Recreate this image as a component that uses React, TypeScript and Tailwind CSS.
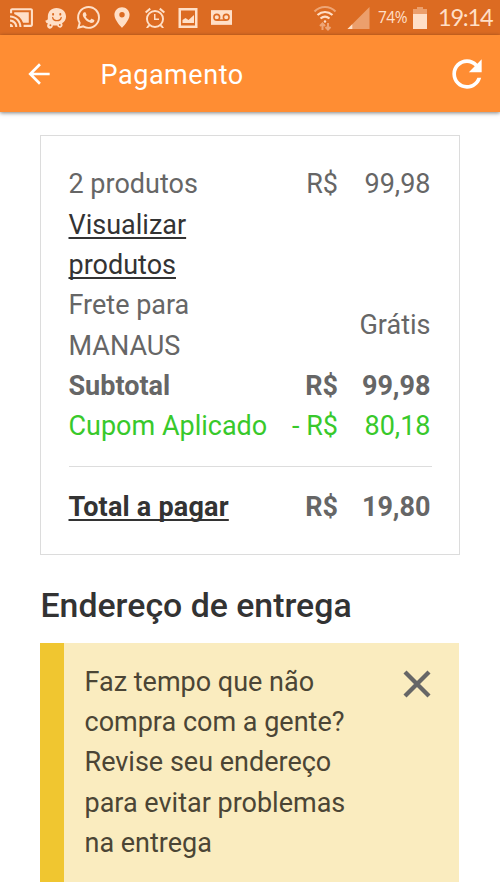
import type { ReactNode } from 'react';

const ROBOTO = "font-['Roboto',sans-serif]";

function Icon({ className, children }: { className: string; children: ReactNode }) {
  return (
    <svg viewBox="0 0 24 24" fill="currentColor" className={`shrink-0 ${className}`}>
      {children}
    </svg>
  );
}

function StatusBar() {
  return (
    <div className="flex h-[35px] items-center bg-[#dc6b22] text-[#ffdfc7]">
      <Icon className="ml-[9px] size-[25px]">
        <path d="M21 3H3c-1.100 0-2 .9-2 2v3h2V5h18v14h-7v2h7c1.100 0 2-.9 2-2V5c0-1.100-.9-2-2-2zM1 18v3h3c0-1.660-1.340-3-3-3zm0-4v2c2.760 0 5 2.240 5 5h2c0-3.870-3.130-7-7-7zm0-4v2c4.970 0 9 4.030 9 9h2c0-6.080-4.930-11-11-11z" />
        <path d="M5 7h14v10h-5.500C12 13 9 10 5 8.600z" />
      </Icon>
      <Icon className="ml-[10px] size-[23px]">
        <path d="M13 2C7.500 2 4 6 4 11v2c0 1.300-.8 2-2.500 2 0 1.500 1 2.700 2.800 3.300a3 3 0 1 0 4.900 2h4.600a2.800 2.800 0 1 0 5-2.200C21.500 16.500 23 14 23 11c0-5-4-9-10-9z" />
        <g fill="none" stroke="#dc6b22" strokeWidth="1.300" strokeLinecap="round">
          <path d="M9 12c1 4.500 8 4.500 9 0" />
          <path d="M9.500 8.200v.8M17 8.200v.8" strokeWidth="2" />
        </g>
        <circle cx="6.700" cy="20" r="1" fill="#dc6b22" />
        <circle cx="16.500" cy="19.800" r="1" fill="#dc6b22" />
      </Icon>
      <Icon className="ml-[10px] size-[23px]">
        <path d="M17.472 14.382c-.297-.149-1.758-.867-2.030-.967-.273-.099-.471-.148-.670.150-.197.297-.767.966-.940 1.164-.173.199-.347.223-.644.075-.297-.150-1.255-.463-2.390-1.475-.883-.788-1.480-1.761-1.653-2.059-.173-.297-.018-.458.130-.606.134-.133.298-.347.446-.520.149-.174.198-.298.298-.497.099-.198.050-.371-.025-.520-.075-.149-.669-1.612-.916-2.207-.242-.579-.487-.500-.669-.510-.173-.008-.371-.010-.570-.010-.198 0-.520.074-.792.372-.272.297-1.040 1.016-1.040 2.479 0 1.462 1.065 2.875 1.213 3.074.149.198 2.096 3.200 5.077 4.487.709.306 1.262.489 1.694.625.712.227 1.360.195 1.871.118.571-.085 1.758-.719 2.006-1.413.248-.694.248-1.289.173-1.413-.074-.124-.272-.198-.570-.347m-5.421 7.403h-.004a9.870 9.870 0 01-5.031-1.378l-.361-.214-3.741.982.998-3.648-.235-.374a9.860 9.860 0 01-1.510-5.260c.001-5.450 4.436-9.884 9.888-9.884 2.640 0 5.122 1.030 6.988 2.898a9.825 9.825 0 012.893 6.994c-.003 5.450-4.437 9.884-9.885 9.884m8.413-18.297A11.815 11.815 0 0012.050 0C5.495 0 .160 5.335.157 11.892c0 2.096.547 4.142 1.588 5.945L.057 24l6.305-1.654a11.882 11.882 0 005.683 1.448h.005c6.554 0 11.890-5.335 11.893-11.893a11.821 11.821 0 00-3.480-8.413z" />
      </Icon>
      <Icon className="ml-[9px] size-[26px]">
        <path d="M12 2C8.130 2 5 5.130 5 9c0 5.250 7 12 7 12s7-6.750 7-12c0-3.870-3.130-7-7-7zm0 9.500a2.500 2.500 0 0 1 0-5 2.500 2.500 0 0 1 0 5z" />
      </Icon>
      <Icon className="ml-[8px] size-[24px]">
        <path d="M22 5.720l-4.600-3.860-1.290 1.530 4.600 3.860L22 5.720zM7.880 3.390L6.600 1.860 2 5.710l1.290 1.530 4.590-3.850zM12.500 8H11v6h5v-1.500h-3.500V8zM12 4a9 9 0 1 0 .001 18.001A9 9 0 0 0 12 4zm0 16c-3.870 0-7-3.130-7-7s3.130-7 7-7 7 3.130 7 7-3.130 7-7 7zM5 19l-2 3h2l2-2zM19 19l2 3h-2l-2-2z" />
      </Icon>
      <Icon className="ml-[9px] size-[24px]">
        <path fillRule="evenodd" d="M2.500 2h19v20h-19zm2.500 2.500v15h14v-15z" />
        <path d="M6.500 17v-3l3-2 3 2 5.500-5v8z" />
      </Icon>
      <svg viewBox="0 0 20 14" className="ml-[11px] h-[15px] w-[21px] shrink-0">
        <rect width="20" height="14" fill="currentColor" />
        <g fill="none" stroke="#dc6b22" strokeWidth="1.500">
          <circle cx="5.500" cy="6.700" r="2.700" />
          <circle cx="14.500" cy="6.700" r="2.700" />
          <path d="M5 9.500h10" />
        </g>
      </svg>
      <svg viewBox="0 0 24 26" fill="none" stroke="currentColor" strokeWidth="2.200" className="ml-[81px] h-[26px] w-6 shrink-0">
        <path d="M1.500 6.500c6-6 15-6 21 0" opacity=".5" />
        <path d="M4.500 10c4.500-4 10.500-4 15 0M7.500 13.500c3-2.500 6-2.500 9 0" />
        <circle cx="12" cy="16.500" r="1.200" fill="currentColor" stroke="none" />
        <path d="M9.500 25v-6M7 21l2.500-2.500L12 21M15 18v6M12.500 22l2.500 2.500 2.500-2.500" opacity=".5" strokeWidth="2" />
      </svg>
      <svg viewBox="0 0 23 23" fill="currentColor" className="ml-[10px] h-[22px] w-[23px] shrink-0">
        <path d="M23 0v23H0z" opacity=".45" />
        <path d="M5 18v5H0z" />
      </svg>
      <span className="ml-[8px] w-[30px] pt-px font-['Open_Sans',sans-serif] text-[15.500px] leading-none tracking-[-0.500px]">74%</span>
      <svg viewBox="0 0 14 22" fill="currentColor" className="ml-[5px] h-[22px] w-[14px] shrink-0">
        <path d="M4 0h6v2h4v5H0V2h4z" opacity=".45" />
        <path d="M0 7h14v15H0z" />
      </svg>
      <span className="ml-[11px] pt-px font-['Lato',sans-serif] text-[23.500px] leading-none tracking-[-1.200px]">19:14</span>
    </div>
  );
}

function AppBar() {
  return (
    <header className="flex h-[77px] items-center bg-[#ff8d33] text-white shadow-[0_1px_4px_rgba(0,0,0,0.500)]">
      <Icon className="ml-[23px] size-[32px]">
        <path d="M20 11H7.830l5.590-5.590L12 4l-8 8 8 8 1.410-1.410L7.830 13H20v-2z" />
      </Icon>
      <h1 className="ml-[45.500px] flex-1 pt-[3px] text-[27px] leading-none tracking-[0.550px]">Pagamento</h1>
      <Icon className="mr-[11px] size-[44px]">
        <path d="M17.650 6.350C16.200 4.900 14.210 4 12 4c-4.420 0-7.990 3.580-7.990 8s3.570 8 7.990 8c3.730 0 6.840-2.550 7.730-6h-2.080c-.820 2.330-3.040 4-5.650 4-3.310 0-6-2.690-6-6s2.690-6 6-6c1.660 0 3.140.690 4.220 1.780L13 11h7V4l-2.350 2.350z" />
      </Icon>
    </header>
  );
}

function Row({ label, currency, amount, className = '' }: { label: ReactNode; currency?: string; amount?: string; className?: string }) {
  return (
    <div className={`flex items-center ${className}`}>
      <div className="flex-1 whitespace-nowrap">{label}</div>
      <div>{currency}</div>
      <div className="w-[94px] pr-[1.500px] text-right">{amount}</div>
    </div>
  );
}

export default function App() {
  return (
    <div className={`h-[889px] overflow-hidden bg-white text-[27px] leading-[40.333px] text-[#666] ${ROBOTO}`}>
      <StatusBar />
      <AppBar />
      <main className="pr-[40px] pl-[40px]">
        <section className="mt-[23px] border border-[#dcdcdc] pr-[27px] pl-[27.500px] pt-[28.200px] pb-[26.500px]">
          <Row label="2 produtos" currency="R$" amount="99,98" />
          <a className="block w-[140px] text-[#333] underline decoration-[1.500px] underline-offset-[3px] [text-decoration-skip-ink:none]">
            Visualizar produtos
          </a>
          <Row label={<>Frete para<br />MANAUS</>} amount="Grátis" />
          <Row label="Subtotal" currency="R$" amount="99,98" className="font-bold" />
          <Row label="Cupom Aplicado" currency="- R$" amount="80,18" className="text-[#38c92b]" />
          <hr className="mt-[19.400px] mb-[20px] border-[#ddd]" />
          <Row
            label={<span className="tracking-[0.200px] text-[#333] underline decoration-[1.500px] underline-offset-[3px] [text-decoration-skip-ink:none]">Total a pagar</span>}
            currency="R$"
            amount="19,80"
            className="font-bold"
          />
        </section>
        <h2 className="mt-[31.500px] pl-[0.500px] text-[33.850px] font-medium text-[#333]">Endereço de entrega</h2>
        <section className="mt-[16px] mr-px flex items-start justify-between border-l-[24px] border-[#f0c630] bg-[#faecbf] pt-[19.300px] pr-[28px] pb-[18.500px] pl-[20.500px] text-[#4b4535]">
          <p className="w-[275px]">Faz tempo que não<br />compra com a gente?<br />Revise seu endereço<br />para evitar problemas<br />na entrega</p>
          <svg viewBox="0 0 28 28" className="mt-[8.500px] size-7 text-[#666]" fill="none" stroke="currentColor" strokeWidth="4.300">
            <path d="M2 2l24 24M26 2L2 26" />
          </svg>
        </section>
      </main>
    </div>
  );
}
